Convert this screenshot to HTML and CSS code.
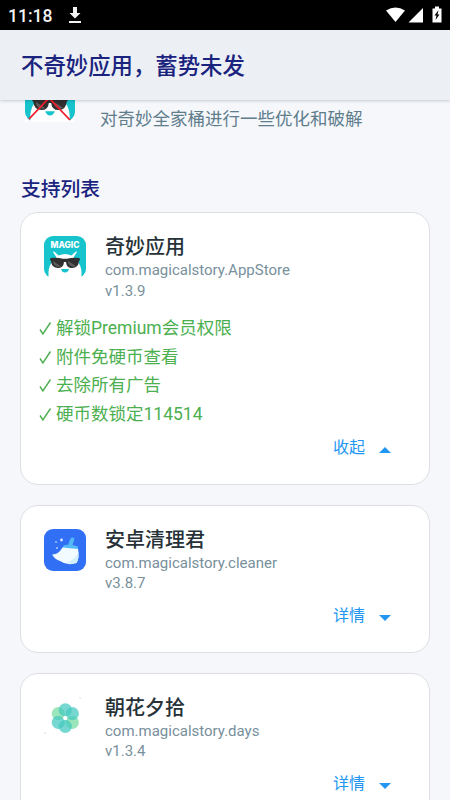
FILE: index.html
```html
<!DOCTYPE html>
<html lang="zh-CN">
<head>
<meta charset="utf-8">
<title>不奇妙应用</title>
<link rel="stylesheet" href="styles.css">
</head>
<body>
<svg class="defs" width="0" height="0" aria-hidden="true">
  <symbol id="magic" viewBox="0 0 42 42">
    <rect width="42" height="42" rx="9" fill="#17c3cd"/>
    <path d="M1 37Q3 41 2.500 42Q4 42 9 42H33Q39 42 41 37V42H0V37Z" fill="#fff"/>
    <path d="M4.500 42V36Q5 29 9 25L12.500 21.500 9 15.900Q9.500 15 10.500 15.700L14.500 19.500Q21 16.500 27.500 19.500L31.500 15.700Q32.500 15 33 15.900L29.500 21.500 33 25Q37 29 37.500 36V42Z" fill="#fff"/>
    <path d="M6.500 22Q13 21 19 22.800H23Q29 21 35.500 22L36 24 35 25Q34.500 32 28 32Q22.500 32 22 26H20Q19.500 32 14 32Q7.500 32 7 25L6 24Z" fill="#303030"/>
    <path d="M9 25L17 30.500Q14 31.500 11 29.500Q9 28 9 25ZM24 25L32 30Q29 31.500 26 29.500Q24 28 24 25Z" fill="#5c5c5c"/>
    <path d="M17 33H25Q24 36.500 21 36.500Q18 36.500 17 33Z" fill="#17c3cd"/>
  </symbol>
</svg>

<div class="status">
  <span class="clock">11:18</span>
  <svg class="download" viewBox="0 0 14 18"><path d="M5 1H9V7H12.500L7 12.500 1.500 7H5ZM1 15H13V17H1Z" fill="#f2f2f2"/></svg>
  <svg class="signals" viewBox="0 0 58 18">
    <path d="M1 4.500Q10.500-1.500 20 4.500L10.500 16Z" fill="#fff"/>
    <path d="M23.500 16.500L38 2V16.500Z" fill="#fff"/>
    <path d="M47.500 2.500H50V.500H54V2.500H56.500V16.500H47.500Z" fill="#fff"/>
    <path d="M53.500 4L49.500 9.500H51.500L50.500 14 54.500 8.500H52.500Z" fill="#000"/>
  </svg>
</div>
<header class="bar"><h1>不奇妙应用，蓄势未发</h1></header>

<main>
  <section class="intro">
    <div class="intro-logo">
      <svg viewBox="0 0 50 50"><use href="#magic" width="50" height="50"/><path d="M4 47L24 26M24 26L45 48" stroke="#f01c2b" stroke-width="1.800"/></svg>
    </div>
    <p>对奇妙全家桶进行一些优化和破解</p>
  </section>
  <h2>支持列表</h2>

  <article class="card">
    <div class="app">
      <svg class="logo" viewBox="0 0 42 42">
        <use href="#magic" width="42" height="42"/>
        <text x="21" y="12" text-anchor="middle" textLength="29" lengthAdjust="spacingAndGlyphs" class="logo-word">MAGIC</text>
      </svg>
      <div class="info"><h3>奇妙应用</h3><p>com.magicalstory.AppStore</p><p>v1.3.9</p></div>
    </div>
    <ul>
      <li><svg class="check" viewBox="0 0 14 18"><path d="M1 10.500L3.900 15 11.500 3.500"/></svg>解锁Premium会员权限</li>
      <li><svg class="check" viewBox="0 0 14 18"><path d="M1 10.500L3.900 15 11.500 3.500"/></svg>附件免硬币查看</li>
      <li><svg class="check" viewBox="0 0 14 18"><path d="M1 10.500L3.900 15 11.500 3.500"/></svg>去除所有广告</li>
      <li><svg class="check" viewBox="0 0 14 18"><path d="M1 10.500L3.900 15 11.500 3.500"/></svg>硬币数锁定114514</li>
    </ul>
    <div class="toggle">收起<i class="arrow up"></i></div>
  </article>

  <article class="card">
    <div class="app">
      <svg class="logo" viewBox="0 0 42 42">
        <rect width="42" height="42" rx="9" fill="#316ff5"/>
        <path d="M24 16L26.500 9.500Q28.500 7.500 30.500 9.500L28.500 16L34 17.500V20.500L18.500 19Q19.500 15 24 16Z" fill="#55b9f7"/>
        <path d="M18.500 18.500L34 20Q36 28 32.500 34Q23 37 16 32Q11 30.500 8 25.500Q14 26 18.500 18.500Z" fill="#f2fbff"/>
        <path d="M23 34Q30 31 34 24Q35 30 32.500 34Q27 35.500 23 34Z" fill="#d2f0fb"/>
        <circle cx="17.500" cy="11" r="1.400" fill="#d8e9ff"/><circle cx="12" cy="13" r=".9" fill="#a9cbff"/><circle cx="13" cy="19" r="1" fill="#a9cbff"/>
      </svg>
      <div class="info"><h3>安卓清理君</h3><p>com.magicalstory.cleaner</p><p>v3.8.7</p></div>
    </div>
    <div class="toggle">详情<i class="arrow down"></i></div>
  </article>

  <article class="card">
    <div class="app">
      <svg class="logo" viewBox="0 0 42 42">
        <g fill-opacity=".72">
          <circle cx="14.300" cy="16.700" r="6.600" fill="#75dda0"/><circle cx="28.300" cy="25.300" r="6.600" fill="#75dda0"/>
          <circle cx="28.300" cy="16.700" r="6.600" fill="#43c9bf"/><circle cx="14.300" cy="25.300" r="6.600" fill="#43c9bf"/>
          <circle cx="21.300" cy="12.900" r="6.600" fill="#43c9bf"/><circle cx="21.300" cy="29.300" r="6.600" fill="#43c9bf"/>
        </g>
        <circle cx="21.300" cy="21" r="2" fill="#fff"/>
        <path d="M35 0L37 1.500M0 35L2 37" stroke="#ddd"/>
      </svg>
      <div class="info"><h3>朝花夕拾</h3><p>com.magicalstory.days</p><p>v1.3.4</p></div>
    </div>
    <div class="toggle">详情<i class="arrow down"></i></div>
  </article>
</main>
</body>
</html>
```
FILE: styles.css
```css
* { box-sizing: border-box; margin: 0; padding: 0; }
body {
  height: 800px;
  overflow: hidden;
  display: flex;
  flex-direction: column;
  background: #f5f7fb;
  font-family: Roboto, "Noto Sans CJK SC", sans-serif;
}
.defs { position: absolute; }
.status {
  flex: none;
  height: 30px;
  display: flex;
  align-items: center;
  padding: 0 8px;
  background: #000;
  color: #f2f2f2;
}
.clock { width: 60px; font-size: 17.5px; font-weight: 500; line-height: 30px; padding-top: 1px; }
.download { width: 14px; height: 18px; }
.signals { width: 58px; height: 18px; margin-left: auto; margin-right: -1px; }
.bar {
  flex: none;
  position: relative;
  z-index: 1;
  height: 70px;
  padding-left: 21px;
  background: #eceff4;
  box-shadow: 0 1px 3px rgba(0, 0, 0, .18);
}
h1 { font-size: 22.4px; font-weight: 500; line-height: 72px; color: #1a237e; }
main { flex: 1; min-height: 0; overflow: hidden; padding: 0 20px; }
.intro { height: 72px; display: flex; padding-left: 5px; }
.intro-logo { width: 50px; height: 50px; margin-top: -28px; }
.intro-logo svg { display: block; width: 50px; height: 50px; }
.intro p { margin-left: 25px; font-size: 17.5px; line-height: 38px; color: #607d8b; }
h2 { height: 40px; padding-left: 1px; font-size: 19.8px; font-weight: 500; line-height: 36px; color: #1a237e; }
.card {
  margin-bottom: 20px;
  padding: 20px 38px 19.5px 18px;
  border: 1px solid #dedfe2;
  border-radius: 18px;
  background: #fff;
}
.app { display: flex; height: 69.5px; padding-left: 5px; gap: 19px; }
.logo { flex: none; width: 42px; height: 42px; margin-top: 3px; }
.logo-word { font: 800 8.5px Inter, sans-serif; fill: #fff; }
.info { padding-top: 2px; }
h3 { font-size: 20px; font-weight: 500; line-height: 25px; color: #263238; }
.info p { font-size: 15px; line-height: 20.5px; color: #78909c; }
ul { list-style: none; padding-top: 11px; margin-bottom: -1px; }
li { display: flex; align-items: center; height: 28.7px; font-size: 17.5px; line-height: 28px; color: #4caf50; }
.check { width: 14px; height: 18px; margin-right: 3px; fill: none; stroke: #4caf50; stroke-width: 1.4; }
.toggle {
  display: flex;
  justify-content: flex-end;
  align-items: center;
  height: 37px;
  font-size: 16px;
  color: #2196f3;
}
.arrow { margin: 8px 0 0 14px; border: 6px solid transparent; }
.up { border-top: 0; border-bottom-color: #2196f3; }
.down { border-bottom: 0; border-top-color: #2196f3; }
```
